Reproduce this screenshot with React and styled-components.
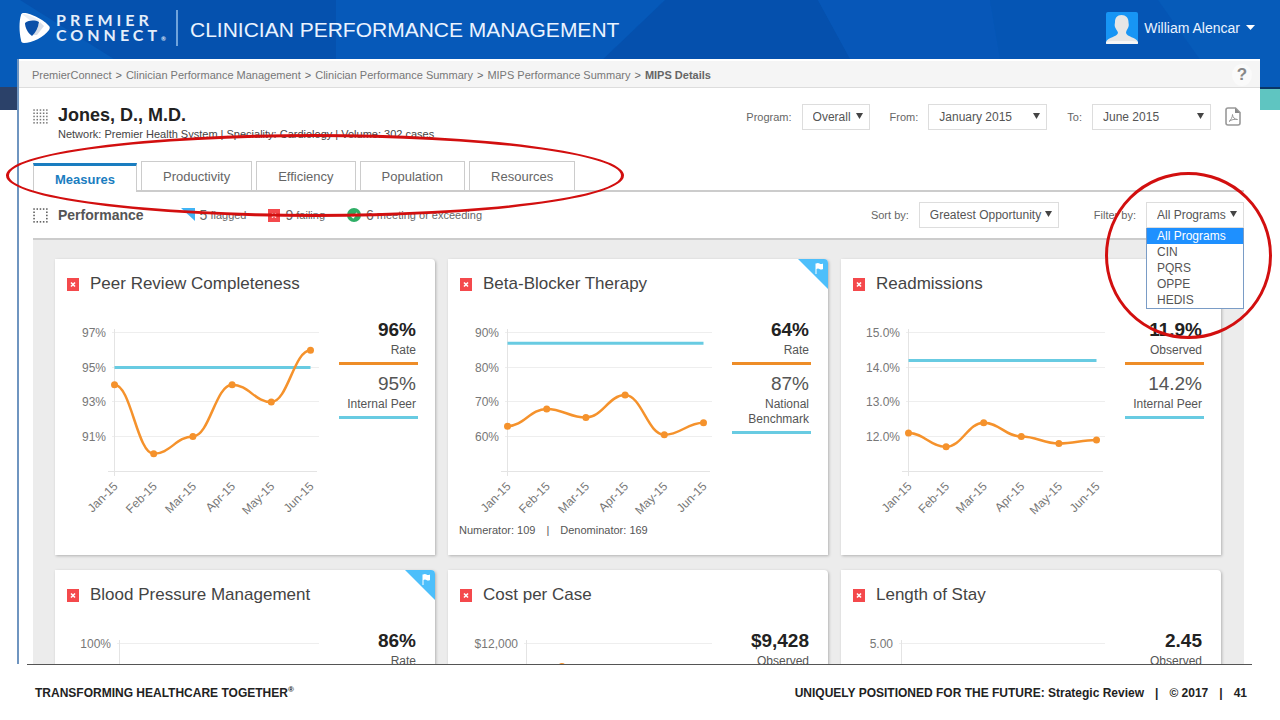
import React from 'react'
import styled, { createGlobalStyle, css } from 'styled-components'

const months = ['Jan-15', 'Feb-15', 'Mar-15', 'Apr-15', 'May-15', 'Jun-15']

const crumbs = ['PremierConnect', 'Clinician Performance Management', 'Clinician Performance Summary', 'MIPS Performance Summary']

const tabs = ['Measures', 'Productivity', 'Efficiency', 'Population', 'Resources']

const programs = ['All Programs', 'CIN', 'PQRS', 'OPPE', 'HEDIS']

const measures = [
  {
    title: 'Peer Review Completeness',
    axis: 49,
    ticks: [97, 95, 93, 91],
    tickGap: 2,
    format: v => `${v}%`,
    labels: months,
    values: [94, 90, 91, 94, 93, 96],
    target: 95,
    stats: [{ value: '96%', label: 'Rate' }, { value: '95%', label: 'Internal Peer' }],
  },
  {
    title: 'Beta-Blocker Therapy',
    flagged: true,
    axis: 49,
    ticks: [90, 80, 70, 60],
    tickGap: 10,
    format: v => `${v}%`,
    labels: months,
    values: [63, 68, 65.5, 72, 60.5, 64],
    target: 87,
    stats: [{ value: '64%', label: 'Rate' }, { value: '87%', label: 'National Benchmark' }],
    note: ['Numerator: 109', 'Denominator: 169'],
  },
  {
    title: 'Readmissions',
    axis: 57,
    ticks: [15, 14, 13, 12],
    tickGap: 1,
    format: v => `${v.toFixed(1)}%`,
    labels: months,
    values: [12.1, 11.7, 12.4, 12, 11.8, 11.9],
    target: 14.2,
    stats: [{ value: '11.9%', label: 'Observed' }, { value: '14.2%', label: 'Internal Peer' }],
  },
  {
    title: 'Blood Pressure Management',
    flagged: true,
    axis: 54,
    ticks: [100],
    tickGap: 10,
    format: v => `${v}%`,
    stats: [{ value: '86%', label: 'Rate' }],
  },
  {
    title: 'Cost per Case',
    axis: 68,
    ticks: [12000],
    tickGap: 2000,
    format: v => `$${v.toLocaleString('en-US')}`,
    values: [9000, 10700, 9800, 9500, 9300, 9428],
    stats: [{ value: '$9,428', label: 'Observed' }],
  },
  {
    title: 'Length of Stay',
    axis: 50,
    ticks: [5],
    tickGap: 1,
    format: v => v.toFixed(2),
    stats: [{ value: '2.45', label: 'Observed' }],
  },
]

const GlobalStyle = createGlobalStyle`
  *{
    box-sizing:border-box;
  }
  body{
    margin:0;
    background:#fff;
    font-family:"Liberation Sans", Arial, sans-serif;
    color:#555;
  }
`

const Backdrop = () => (
  <BackdropSvg viewBox="0 0 1280 110" preserveAspectRatio="none" aria-hidden="true">
    <rect width="1280" height="88" fill="#065bb9" />
    <path d="M20 0H336V88H160Z" fill="#0551ae" />
    <path d="M336 0H665L573 88H336Z" fill="#0659b9" />
    <path d="M665 0H818L866 88H573Z" fill="#0550ad" />
    <path d="M818 0H990L1005 88H866Z" fill="#0757b8" />
    <path d="M990 0H1158L1220 88H1005Z" fill="#0555b4" />
    <rect y="87" width="1280" height="23" fill="#2b4169" />
    <rect x="1240" y="87" width="40" height="2" fill="#0a3566" />
    <rect x="1240" y="89" width="40" height="21" fill="#5fc5c1" />
  </BackdropSvg>
)

const Logo = () => (
  <svg width="31" height="32" viewBox="0 0 31 32" aria-hidden="true">
    <path d="M4 1C10 0 26 8 30 14C31 15 31 16 30 18C25 25 13 31 5 31C3 31 2 30 2 28C0 20 0 9 2 3C2 2 3 1 4 1Z" fill="#fff" />
    <path d="M3 2L13 10L21 9L27 13C21 8 10 2 3 2Z" fill="#e9eef5" />
    <path d="M21 10L25 14L18 23L14 23Z" fill="#d6dde8" />
    <path d="M6 11C10 8 16 8 20 10C19 16 17 20 13 24C9 21 6 16 6 11Z" fill="#0b50a8" />
  </svg>
)

const Avatar = () => (
  <svg width="32" height="32" viewBox="0 0 32 32" aria-hidden="true">
    <rect width="32" height="32" rx="2" fill="#1795f5" />
    <path d="M15.500 3C20 3 22.500 6 22.500 10C22.500 12 23.500 13 22 16C21 18 20 19 20 21C21 25 30 25 32 30V31Q32 32 31 32H1Q0 32 0 31V30C2 25 11 25 12 21C12 19 10 18 9.500 16C8 13 9 12 9 10C9 6 11 3 15.500 3Z" fill="#e6e6e6" />
    <path d="M0 30Q4 28.500 8 29H24Q29 28.500 32 30V31Q32 32 31 32H1Q0 32 0 31Z" fill="#f6f6f6" />
  </svg>
)

const DotGrid = ({ hollow }) => (
  <svg width="15" height="15" viewBox="0 0 15 15" aria-hidden="true">
    {[0, 1, 2, 3, 4].map(r =>
      [0, 1, 2, 3, 4].map(c => {
        const inside = r > 0 && r < 4 && c > 0 && c < 4
        if (hollow && inside) return null
        return <rect key={`${r}${c}`} x={c * 3.2 + 0.3} y={r * 3.2 + 0.3} width="1.500" height="1.500" fill={hollow ? '#555' : '#777'} />
      })
    )}
  </svg>
)

const PdfIcon = () => (
  <svg width="16" height="19" viewBox="0 0 16 19" aria-hidden="true">
    <path d="M3 1H10.500L15 5.500V16Q15 18 13 18H3Q1 18 1 16V3Q1 1 3 1Z" fill="#fff" stroke="#999" strokeWidth="1.600" />
    <path d="M10 1V6H15Z" fill="#888" />
    <path d="M4 14.500C6 13 7.500 10 7.500 7.500C7.500 10 9.500 12.500 12.500 12.500C9.500 12 6.500 12.500 4 14.500Z" fill="none" stroke="#999" />
  </svg>
)

const FailIcon = () => (
  <svg width="12" height="13" viewBox="0 0 12 13" aria-hidden="true">
    <rect width="12" height="13" fill="#f4494c" />
    <path d="M4 4.500L8 8.500M8 4.500L4 8.500" stroke="#fff" strokeWidth="1.600" />
  </svg>
)

const FlaggedIcon = () => (
  <svg width="14" height="14" viewBox="0 0 14 14" aria-hidden="true">
    <path d="M0 0H14V13Z" fill="#41b4f5" />
  </svg>
)

const PassIcon = () => (
  <svg width="14" height="14" viewBox="0 0 14 14" aria-hidden="true">
    <circle cx="7" cy="7" r="7" fill="#2eae66" />
    <path d="M4 7.500L6.200 9.500L10 5" fill="none" stroke="#fff" strokeWidth="1.600" />
  </svg>
)

const FlagCorner = () => (
  <CornerSvg width="30" height="30" viewBox="0 0 30 30" aria-hidden="true">
    <path d="M0 0H26Q30 0 30 4V30Z" fill="#4dbffb" />
    <path d="M18 4.500Q20 3.500 21.500 4.500T25 4.500V10Q23 11 21.500 10T18.500 10V15H17.500V4.500Z" fill="#fff" />
  </CornerSvg>
)

const Field = ({ id, label, width, options, children }) => (
  <FieldWrap>
    <label htmlFor={id}>{label}</label>
    <SelectBox $width={width}>
      <select id={id} defaultValue={options[0]}>
        {options.map(o => <option key={o}>{o}</option>)}
      </select>
      <Caret width="7" height="6" viewBox="0 0 7 6" aria-hidden="true">
        <path d="M0 0H7L3.500 6Z" fill="#444" />
      </Caret>
      {children}
    </SelectBox>
  </FieldWrap>
)

const Chart = ({ axis, ticks, tickGap, format, labels = [], values = [], target, title }) => {
  const top = 13
  const step = 34.5
  const unit = step / tickGap
  const right = 246
  const x = i => axis + 0.5 + (i * (right - axis - 1)) / 5
  const y = v => top + (ticks[0] - v) * unit
  // every point is a flat spot on the curve
  const line = values.reduce((d, v, i) => {
    if (i === 0) return `M${x(0)} ${y(v)}`
    const bend = (x(1) - x(0)) * 0.42
    return `${d}C${x(i - 1) + bend} ${y(values[i - 1])} ${x(i) - bend} ${y(v)} ${x(i)} ${y(v)}`
  }, '')

  return (
    <ChartSvg width="265" height="200" viewBox="0 0 265 200" role="img" aria-label={title}>
      {ticks.map((t, i) => (
        <g key={t}>
          <text x={axis - 8} y={top + i * step + 4} textAnchor="end">{format(t)}</text>
          <path d={`M${axis - 2} ${Math.round(top + i * step) - 0.5}H254`} stroke="#eee" />
        </g>
      ))}
      <path d={`M${axis - 6} 151.500H252`} stroke="#e4e4e4" />
      <path d={`M${axis + 0.5} 9V156`} stroke="#e4e4e4" />
      {labels.map((m, i) => (
        <text key={m} textAnchor="end" transform={`translate(${x(i) + 4} 167) rotate(-45)`}>{m}</text>
      ))}
      {target && <path d={`M${x(0)} ${y(target)}H${x(5)}`} stroke="#68cbe2" strokeWidth="3" />}
      <path d={line} fill="none" stroke="#f5922c" strokeWidth="2.500" />
      {values.map((v, i) => <circle key={i} cx={x(i)} cy={y(v)} r="3.500" fill="#f5922c" />)}
    </ChartSvg>
  )
}

const MeasureCard = ({ measure }) => (
  <Card>
    <CardTitle>
      <FailIcon />
      <h2>{measure.title}</h2>
    </CardTitle>
    {measure.flagged && <FlagCorner />}
    <CardBody>
      <Chart {...measure} />
      <Stats>
        {measure.stats.map((s, i) => (
          <Stat key={s.label} $main={i === 0}>
            <strong>{s.value}</strong>
            <span>{s.label}</span>
          </Stat>
        ))}
      </Stats>
    </CardBody>
    {measure.note && (
      <Note>
        <span>{measure.note[0]}</span>
        <span>|</span>
        <span>{measure.note[1]}</span>
      </Note>
    )}
  </Card>
)

const App = () => {
  return (
    <Slide>
      <GlobalStyle />
      <Backdrop />
      <Stage>
        <Header>
          <Brand>
            <Logo />
            <Wordmark>
              <span>PREMIER</span>
              <span>CONNECT<sup>®</sup></span>
            </Wordmark>
          </Brand>
          <h1>CLINICIAN PERFORMANCE MANAGEMENT</h1>
          <UserButton type="button">
            <Avatar />
            William Alencar
            <svg width="9" height="5" viewBox="0 0 9 5" aria-hidden="true">
              <path d="M0 0H9L4.500 5Z" fill="#fff" />
            </svg>
          </UserButton>
        </Header>
        <Panel>
          <Breadcrumbs aria-label="Breadcrumb">
            {crumbs.map(c => (
              <React.Fragment key={c}>
                <a href="#">{c}</a>
                <span>&gt;</span>
              </React.Fragment>
            ))}
            <b>MIPS Details</b>
            <HelpButton type="button" aria-label="Help">?</HelpButton>
          </Breadcrumbs>
          <Content>
            <Provider>
              <DotGrid />
              <ProviderText>
                <h2>Jones, D., M.D.</h2>
                <p>Network: Premier Health System | Speciality: Cardiology | Volume: 302 cases</p>
              </ProviderText>
              <Period>
                <Field id="program" label="Program:" width={68} options={['Overall']} />
                <Field id="from" label="From:" width={119} options={['January 2015']} />
                <Field id="to" label="To:" width={119} options={['June 2015']} />
                <IconButton type="button" aria-label="Export PDF"><PdfIcon /></IconButton>
              </Period>
            </Provider>
            <Tabs>
              {tabs.map((t, i) => <Tab key={t} type="button" $active={i === 0}>{t}</Tab>)}
              <TabsMark />
            </Tabs>
            <Toolbar>
              <DotGrid hollow />
              <h3>Performance</h3>
              <Legend>
                <li><FlaggedIcon /><b>5</b>flagged</li>
                <li><FailIcon /><b>9</b>failing</li>
                <li><PassIcon /><b>6</b>meeting or exceeding</li>
              </Legend>
              <Filters>
                <Field id="sort" label="Sort by:" width={140} options={['Greatest Opportunity']} />
                <Field id="filter" label="Filter by:" width={98} options={programs}>
                  <Menu role="listbox" aria-label="Programs">
                    {programs.map((p, i) => (
                      <MenuItem key={p} role="option" aria-selected={i === 0} $active={i === 0}>{p}</MenuItem>
                    ))}
                  </Menu>
                  <FilterMark />
                </Field>
              </Filters>
            </Toolbar>
            <Board>
              {measures.map(m => <MeasureCard key={m.title} measure={m} />)}
            </Board>
          </Content>
        </Panel>
      </Stage>
      <Footer>
        <div>TRANSFORMING HEALTHCARE TOGETHER<sup>®</sup></div>
        <FooterRight>
          <span>UNIQUELY POSITIONED FOR THE FUTURE: Strategic Review</span>
          <span>|</span>
          <span>© 2017</span>
          <span>|</span>
          <span>41</span>
        </FooterRight>
      </Footer>
    </Slide>
  )
}

const Slide = styled.div`
  position:relative;
  display:flex;
  flex-direction:column;
  height:100vh;
  overflow:hidden;
`

const BackdropSvg = styled.svg`
  position:absolute;
  top:0;
  left:0;
  width:100%;
  height:110px;
`

const Stage = styled.main`
  position:relative;
  flex:1;
  min-height:0;
  overflow:hidden;
`

const Header = styled.header`
  display:flex;
  align-items:center;
  height:59px;
  padding:0 25px 4px 19px;
  color:#fff;
  h1{
    margin:0;
    padding-top:4px;
    font-size:21px;
    font-weight:400;
    color:#eaf3ff;
  }
`

const Brand = styled.div`
  display:flex;
  align-items:center;
  gap:6px;
  height:36px;
  width:159px;
  margin-right:12px;
  border-right:2px solid #6fa3dc;
`

const Wordmark = styled.div`
  display:flex;
  flex-direction:column;
  padding-bottom:2px;
  font-family:Lato, "Liberation Sans", sans-serif;
  font-size:16px;
  font-weight:700;
  line-height:15px;
  letter-spacing:4px;
  color:#e4eefa;
  sup{
    font-size:6px;
    line-height:1px;
    letter-spacing:0;
    vertical-align:baseline;
  }
`

const UserButton = styled.button`
  display:flex;
  align-items:center;
  gap:6px;
  margin-left:auto;
  padding:0;
  border:0;
  background:none;
  color:#eaf3ff;
  font-family:inherit;
  font-size:14px;
`

const Panel = styled.div`
  margin:0 20px 0 17px;
  border-left:2px solid #6f95c0;
  background:#fff;
`

const Breadcrumbs = styled.nav`
  display:flex;
  align-items:center;
  gap:4px;
  height:29px;
  padding:2px 8px 0 13px;
  border-top:2px solid #fff;
  border-bottom:1px solid #ddd;
  background:#f5f5f5;
  font-size:11px;
  color:#666;
  a{
    color:#777;
    text-decoration:none;
  }
`

const HelpButton = styled.button`
  width:20px;
  height:22px;
  margin-left:auto;
  padding:0;
  border:0;
  border-radius:50%;
  background:#fafafa;
  color:#888;
  font-family:inherit;
  font-size:17px;
  font-weight:700;
`

const Content = styled.div`
  padding:0 16px 0 14px;
`

const Provider = styled.section`
  display:flex;
  align-items:flex-start;
  height:73px;
  padding-top:16px;
  > svg{
    margin-top:5px;
  }
`

const ProviderText = styled.div`
  margin-left:10px;
  h2{
    margin:0;
    font-size:18px;
    line-height:22px;
    color:#222;
  }
  p{
    margin:0;
    font-size:11px;
    line-height:16px;
    color:#444;
  }
`

const Period = styled.div`
  display:flex;
  align-items:center;
  gap:20px;
  margin-left:auto;
  padding-right:3px;
`

const IconButton = styled.button`
  display:flex;
  margin:-2px 0 0 -6px;
  padding:0;
  border:0;
  background:none;
`

const FieldWrap = styled.div`
  display:flex;
  align-items:center;
  gap:10px;
  label{
    font-size:11px;
    color:#666;
  }
`

const SelectBox = styled.div`
  position:relative;
  width:${p => p.$width}px;
  select{
    display:block;
    width:100%;
    height:26px;
    padding:0 0 0 10px;
    border:1px solid #ddd;
    border-radius:0;
    background:#fff;
    appearance:none;
    font-family:inherit;
    font-size:12px;
    color:#555;
  }
`

const Caret = styled.svg`
  position:absolute;
  top:9px;
  right:7px;
  pointer-events:none;
`

const Mark = styled.div`
  position:absolute;
  z-index:3;
  border:3px solid #d20f0f;
  border-radius:50%;
  pointer-events:none;
`

const TabsMark = styled(Mark)`
  top:-27px;
  left:-27px;
  width:618px;
  height:83px;
`

const FilterMark = styled(Mark)`
  top:-30px;
  left:-41px;
  width:167px;
  height:167px;
`

const Tabs = styled.nav`
  position:relative;
  display:flex;
  gap:4px;
  height:31px;
  border-bottom:2px solid #ccc;
`

const Tab = styled.button`
  height:29px;
  padding:0 21px;
  border:1px solid #ccc;
  border-bottom:0;
  background:#fff;
  color:#666;
  font-family:inherit;
  font-size:13px;
  ${p => p.$active && css`
    margin-top:2px;
    border-top:3px solid #1a7dc0;
    color:#1a7dc0;
    font-weight:700;
  `}
`

const Toolbar = styled.section`
  display:flex;
  align-items:center;
  height:48px;
  border-bottom:2px solid #ccc;
  h3{
    margin:0 37px 0 10px;
    font-size:14px;
    color:#555;
  }
`

const Legend = styled.ul`
  display:flex;
  gap:22px;
  margin:0;
  padding:0;
  list-style:none;
  font-size:11px;
  color:#666;
  li{
    display:flex;
    align-items:center;
  }
  b{
    margin:0 3px 0 5px;
    font-size:14px;
    font-weight:400;
  }
`

const Filters = styled.div`
  display:flex;
  gap:35px;
  margin-left:auto;
`

const Menu = styled.ul`
  position:absolute;
  z-index:2;
  top:26px;
  left:0;
  width:100%;
  margin:0;
  padding:0;
  border:1px solid #7a9cc6;
  border-top:0;
  background:#fff;
  list-style:none;
  font-size:12px;
`

const MenuItem = styled.li`
  padding-left:10px;
  line-height:16px;
  background:${p => (p.$active ? '#1e90ff' : '#fff')};
  color:${p => (p.$active ? '#fff' : '#555')};
`

const Board = styled.section`
  display:grid;
  grid-template-columns:repeat(3, 1fr);
  gap:15px 13px;
  padding:19px 23px 20px 22px;
  background:#ececec;
`

const Card = styled.article`
  position:relative;
  min-height:296px;
  padding-top:15px;
  border-radius:0 4px 0 0;
  background:#fff;
  box-shadow:1px 1px 3px rgba(0,0,0,0.25);
`

const CornerSvg = styled.svg`
  position:absolute;
  top:0;
  right:0;
`

const CardTitle = styled.div`
  display:flex;
  align-items:center;
  gap:11px;
  padding-left:12px;
  h2{
    margin:0;
    font-size:17px;
    font-weight:400;
    line-height:20px;
    color:#444;
  }
`

const CardBody = styled.div`
  display:flex;
  justify-content:space-between;
  margin-top:26px;
  padding:0 17px 0 10px;
`

const ChartSvg = styled.svg`
  flex:none;
  text{
    font-size:12px;
    fill:#777;
  }
`

const Stats = styled.div`
  display:flex;
  flex-direction:column;
  gap:9px;
  width:79px;
`

const Stat = styled.div`
  display:flex;
  flex-direction:column;
  gap:3px;
  padding:0 2px 4px 0;
  border-bottom:3px solid ${p => (p.$main ? '#ee8d28' : '#68cbe2')};
  text-align:right;
  strong{
    font-size:19px;
    line-height:20px;
    font-weight:${p => (p.$main ? 700 : 400)};
    color:${p => (p.$main ? '#222' : '#555')};
  }
  span{
    font-size:12px;
    line-height:15px;
    color:#555;
  }
`

const Note = styled.div`
  display:flex;
  gap:11px;
  padding-left:11px;
  font-size:11px;
  line-height:20px;
  color:#555;
`

const Footer = styled.footer`
  display:flex;
  align-items:center;
  justify-content:space-between;
  height:56px;
  margin:0 28px 0 27px;
  padding:0 5px 0 8px;
  border-top:1px solid #555;
  font-size:12px;
  font-weight:700;
  color:#222;
  sup{
    font-size:8px;
    line-height:1px;
  }
`

const FooterRight = styled.div`
  display:flex;
  gap:11px;
`

export default App
